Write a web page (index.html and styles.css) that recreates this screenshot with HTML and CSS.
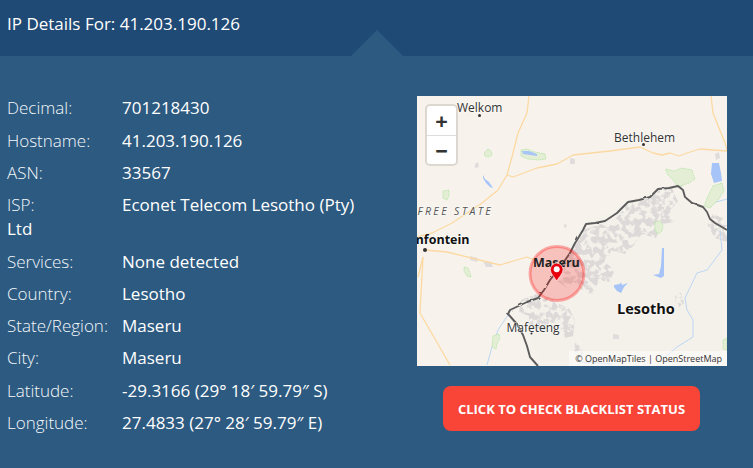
FILE: index.html
```html
<!DOCTYPE html>
<html lang="en">
<head>
<meta charset="utf-8">
<title>IP Details</title>
<link rel="stylesheet" href="styles.css">
</head>
<body>
<header class="top">
  <h1 class="title">IP Details For: 41.203.190.126</h1>
  <span class="notch"></span>
</header>
<main class="panel">
  <section class="info">
    <p class="row"><span class="label">Decimal:</span>701218430</p>
    <p class="row"><span class="label">Hostname:</span>41.203.190.126</p>
    <p class="row"><span class="label">ASN:</span>33567</p>
    <p class="row"><span class="label">ISP:</span>Econet Telecom Lesotho (Pty) Ltd</p>
    <p class="row"><span class="label">Services:</span>None detected</p>
    <p class="row"><span class="label">Country:</span>Lesotho</p>
    <p class="row"><span class="label">State/Region:</span>Maseru</p>
    <p class="row"><span class="label">City:</span>Maseru</p>
    <p class="row"><span class="label">Latitude:</span>-29.3166 (29° 18′ 59.79″ S)</p>
    <p class="row"><span class="label">Longitude:</span>27.4833 (27° 28′ 59.79″ E)</p>
  </section>
  <aside class="side">
    <div class="map">
      <svg class="map-art" viewBox="0 0 310 270" width="310" height="270" aria-label="Map of Lesotho">
        <defs>
          <filter id="mottle" x="0" y="0" width="100%" height="100%">
            <feTurbulence type="fractalNoise" baseFrequency=".17" numOctaves="3" seed="11" result="n"/>
            <feColorMatrix in="n" type="matrix" values="0 0 0 0 0  0 0 0 0 0  0 0 0 0 0  7 0 0 0 -2.900" result="m"/>
            <feComposite in="SourceGraphic" in2="m" operator="in"/>
          </filter>
          <filter id="jag" x="-5%" y="-5%" width="110%" height="110%">
            <feTurbulence type="fractalNoise" baseFrequency=".16" numOctaves="1" seed="3" result="n"/>
            <feDisplacementMap in="SourceGraphic" in2="n" scale="2.500"/>
          </filter>
          <filter id="soft" x="-10%" y="-10%" width="120%" height="120%">
            <feGaussianBlur stdDeviation="5"/>
          </filter>
        </defs>
        <rect width="310" height="270" fill="#f7f3ec"/>
        <path d="M310 134L268 101L241 93L211 106L169 128L121 202L93 214L121 270L310 270z" fill="#f4f1eb" filter="url(#soft)"/>
        <g fill="#dcd9d8" filter="url(#mottle)">
          <path d="M211 106l22-5 8-8 14-1 6 14-8 8 4 12-12 2-6 14-14-4-6 8-12-2-8 12-10-4-14 6-8-6 10-12 14-8 10-12z"/>
          <path d="M166 134l18-6 12 6 14 0 8 14-10 10-14-4-4 14 8 6-6 12-10-2-6 14-10-2-6-10-10 6-14-10 10-16 10-14 8-14z"/>
          <path d="M104 204l14-6 16 4 10 12-4 14-8-2-4 10-16-8 0-8-10-4z"/>
          <path d="M142 208l10 4 6 12-2 16-8 2-6-14z"/>
          <path d="M296 118l14 6 0 22-12-4-8-14z"/>
          <path d="M158 245l8 10-2 8-7-6z"/>
          <path d="M258 197l6 0 3 10-5 4-4-6z"/>
        </g>
        <g fill="#dfdcdb">
          <path d="M66 165l8 1 2 5-7 0z"/>
          <path d="M53 160l8 2-1 4-7-2z"/>
          <path d="M153 62l5 1 0 5-5 0z"/>
          <path d="M58 68l3-2 1 5-4 1z"/>
          <path d="M258 78l5 3 3 9-5 2-3-7z"/>
          <path d="M298 58l4-2 1 6-4 2z"/>
          <path d="M196 238l6 1 0 4-6 0z"/>
          <path d="M147 128l3 1-1 3-2-1z"/>
        </g>
        <g fill="none" stroke="#fcd9a2" stroke-width="1.300" stroke-linejoin="round">
          <path d="M112 0L110 17L101 37L95 61L90 79L81 94L65 107L35 127L15 137L0 141"/>
          <path d="M90 79L96 81L120 72L140 68L156 59L193 55L223 51L236 57L245 59L253 57L262 60L270 57L283 53L310 55"/>
          <path d="M294 0L296 17L308 47L310 54"/>
          <path d="M8 154L30 156L83 169L110 161L120 165"/>
          <path d="M6 161L3 217L33 269"/>
          <path d="M6 161L1 181"/>
        </g>
        <g fill="none" stroke="#bcd7f4" stroke-width="1">
          <path d="M303 134L305 154L290 174L280 177L268 202L270 214L276 224L276 241L260 251L243 266"/>
          <path d="M91 219L81 234L75 251L70 269"/>
          <path d="M165 266L195 268"/>
          <path d="M292 108L310 103"/>
        </g>
        <g fill="#e4eed5" stroke="#a8e29a" stroke-width=".7" stroke-dasharray="1.500 .8">
          <path d="M249 73l8 2 8-3 10 2 3 9-6 4-6 2-5 2-5-7-5-5-2-4z"/>
          <path d="M71 53l3 2 1 4-3 2-4-1-1-3z"/>
          <path d="M26 95l6-1 0 6-2 4-4-2z"/>
          <path d="M104 54l6-1 8 3 10 2 1 5-8 1-10-1-7-3z"/>
          <path d="M238 126l5-1 3 4-1 6-4 3-3-4z"/>
          <path d="M296 90l9-3 2 8-6 9-8 8-6-2 4-10z"/>
          <path d="M47 171l4 1 2 5 1 4-4-1-3-5z"/>
          <path d="M76 240l6-2 1 4-3 6-1 5-4-2z"/>
          <path d="M306 244l4-2 0 12-4-1z"/>
        </g>
        <g fill="#a6c4f7">
          <path d="M105 55l7 0 8 3 0 2-7-1-7-1z"/>
          <path d="M66 79l2 4 4 3 4 6-3-1-4-4-3-5z"/>
          <path d="M295 67l7 0 2 10 1 8-8 2-3-9z"/>
          <path d="M245 152l2 0 0 16 0 12-3 2-8-3 6-1 2-8z"/>
          <path d="M197 189l6-1 1-2 1 3 6-2-4 4-3 6-4-2-3-4z"/>
        </g>
        <path d="M310 134L298 127L293 123L290 116L286 111L275 107L268 101L266 94L261 90L252 92L241 93L233 101L222 104L211 106L205 112L200 117L194 121L188 125L178 127L169 128L166 134L160 144L158 147L153 157L144 170L133 184L127 194L121 202L110 206L93 214L91 218L100 228L106 239L110 250L113 261L121 270" fill="none" stroke="#5c5c5c" stroke-width="1.900" stroke-linejoin="round" filter="url(#jag)"/>
        <circle cx="140" cy="177.500" r="27" fill="#ff0000" fill-opacity=".2" stroke="#ff0000" stroke-opacity=".3" stroke-width="3"/>
        <g font-family="'Open Sans','Noto Sans',sans-serif" fill="#333" stroke="#fff" stroke-opacity=".55" stroke-width="1.400" paint-order="stroke">
          <text x="40" y="15.500" font-size="12">Welkom</text>
          <text x="197" y="46" font-size="12">Bethlehem</text>
          <text x="0.500" y="119" font-size="10.500" font-style="italic" letter-spacing="2.400" fill="#555">FREE STATE</text>
          <text x="52.500" y="147.500" font-size="12.500" font-weight="700" fill="#111" text-anchor="end">Bloemfontein</text>
          <text x="116" y="171" font-size="12.500" font-weight="700" fill="#222" stroke="none">Maseru</text>
          <text x="89.500" y="236" font-size="12">Mafeteng</text>
          <text x="200" y="218" font-size="14.500" font-weight="700" fill="#111">Lesotho</text>
        </g>
        <g fill="#333">
          <circle cx="62.500" cy="19.500" r="1.500"/>
          <circle cx="226.500" cy="48.500" r="1.500"/>
          <circle cx="8" cy="154" r="2"/>
          <circle cx="114.500" cy="237.500" r="1"/>
        </g>
        <path d="M139.700 167.200a6.300 6.300 0 0 1 6.300 6.300c0 4-4 7.600-6.300 11.500c-2.300-3.900-6.300-7.500-6.300-11.500a6.300 6.300 0 0 1 6.300-6.300z" fill="#e8000f" stroke="#fff" stroke-width=".6"/>
        <circle cx="139.700" cy="173.300" r="3" fill="#fff"/>
      </svg>
      <div class="zoom">
        <span class="zoom-btn">+</span>
        <span class="zoom-btn">−</span>
      </div>
      <div class="credit">© OpenMapTiles | OpenStreetMap</div>
    </div>
    <a class="cta" href="#">Click to check blacklist status</a>
  </aside>
</main>
</body>
</html>
```
FILE: styles.css
```css
* { box-sizing: border-box; }
html, body { margin: 0; height: 100%; }
body {
  background: #2d5a80;
  color: #fff;
  font-family: "Open Sans", "Noto Sans", sans-serif;
  font-size: 17px;
  line-height: 24px;
  overflow: hidden;
}
.top {
  position: relative;
  height: 56px;
  background: #1f4a75;
  padding: 12px 7px 0;
}
.title {
  margin: 0;
  font-size: 17px;
  font-weight: 400;
  line-height: 24px;
}
.notch {
  position: absolute;
  left: 351px;
  bottom: 0;
  border-style: solid;
  border-width: 0 26px 26px;
  border-color: transparent transparent #2d5a80;
}
.panel {
  display: flex;
  padding: 40px 0 0 7px;
}
.info {
  width: 360px;
  margin-right: 50px;
  padding-top: .35px;
}
.row {
  margin: 0 0 8.3px;
}
.label {
  display: inline-block;
  width: 115px;
  font-weight: 300;
  color: #f4f8fb;
}
.side {
  width: 310px;
  display: flex;
  flex-direction: column;
  align-items: flex-start;
}
.map {
  position: relative;
  width: 310px;
  height: 270px;
  overflow: hidden;
}
.map-art { display: block; }
.zoom {
  position: absolute;
  left: 8px;
  top: 8px;
  width: 33px;
  height: 62px;
  display: flex;
  flex-direction: column;
  background: #fff;
  border: 2px solid #dcd8d0;
  border-radius: 5px;
}
.zoom-btn {
  flex: 1;
  display: flex;
  align-items: center;
  justify-content: center;
  color: #333;
  font-size: 22px;
  font-weight: 700;
  line-height: 1;
}
.zoom-btn + .zoom-btn { border-top: 1px solid #ddd; }
.credit {
  position: absolute;
  right: 0;
  bottom: 0;
  padding: 0 5px 0 6px;
  background: rgba(255, 255, 255, .5);
  color: #333;
  font-size: 9px;
  line-height: 15px;
  white-space: nowrap;
}
.cta {
  margin: 20px 0 0 26px;
  width: 257px;
  height: 45px;
  display: flex;
  align-items: center;
  justify-content: center;
  background: #f94438;
  border-radius: 8px;
  color: #fff;
  font-size: 13px;
  font-weight: 700;
  text-transform: uppercase;
  text-decoration: none;
}
```
